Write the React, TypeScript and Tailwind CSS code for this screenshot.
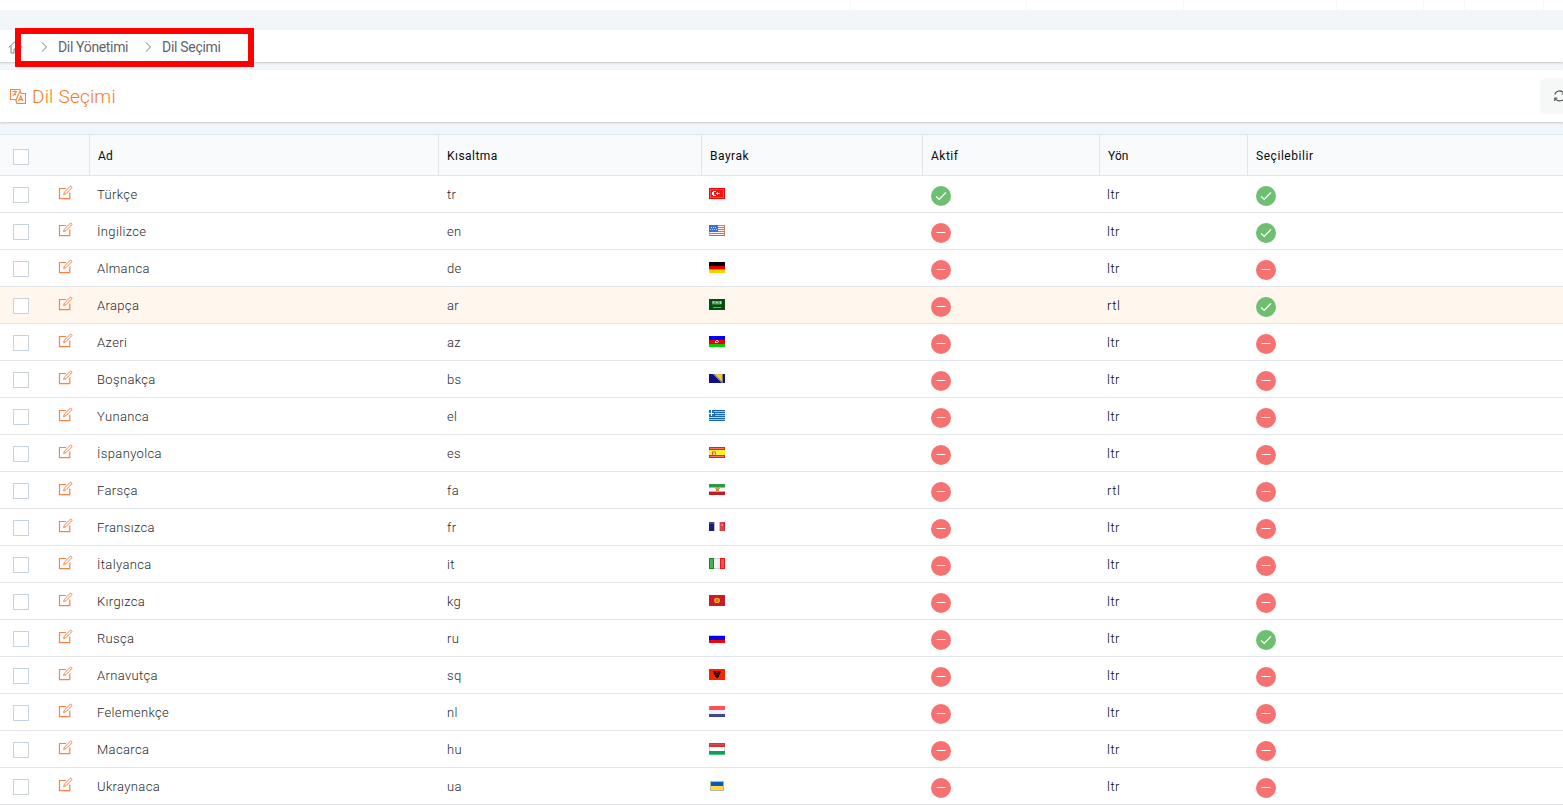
import React from "react";

type Row = { name: string; code: string; rtl?: boolean; active?: boolean; selectable?: boolean; hover?: boolean };

const rows: Row[] = [
  { name: "Türkçe", code: "tr", active: true, selectable: true },
  { name: "İngilizce", code: "en", selectable: true },
  { name: "Almanca", code: "de" },
  { name: "Arapça", code: "ar", rtl: true, selectable: true, hover: true },
  { name: "Azeri", code: "az" },
  { name: "Boşnakça", code: "bs" },
  { name: "Yunanca", code: "el" },
  { name: "İspanyolca", code: "es" },
  { name: "Farsça", code: "fa", rtl: true },
  { name: "Fransızca", code: "fr" },
  { name: "İtalyanca", code: "it" },
  { name: "Kırgızca", code: "kg" },
  { name: "Rusça", code: "ru", selectable: true },
  { name: "Arnavutça", code: "sq" },
  { name: "Felemenkçe", code: "nl" },
  { name: "Macarca", code: "hu" },
  { name: "Ukraynaca", code: "ua" },
];

// x, y, width, height, fill
type Block = [number, number, number, number, string];

const flags: Record<string, Block[]> = {
  tr: [[0, 0, 16, 11, "#f00"], [1, 1, 14, 9, "#fb4a4a"], [2, 2, 12, 7, "#f51414"], [4, 3, 3, 1, "#fff"], [3, 4, 2, 3, "#fff"], [4, 7, 3, 1, "#fff"], [8, 4, 1, 3, "#fdd"], [7, 5, 3, 1, "#fff"], [10, 5, 1, 1, "#fbb"]],
  en: [[0, 0, 16, 11, "#f7efe8"], [0, 0, 16, 1, "#b98a80"], [1, 2, 15, 1, "#e86a5a"], [1, 4, 15, 1, "#e86a5a"], [1, 6, 15, 1, "#e86a5a"], [1, 8, 15, 1, "#e86a5a"], [0, 10, 16, 1, "#b4705f"], [0, 0, 9, 7, "#3d6fd0"], [2, 2, 1, 1, "#cfe0ff"], [4, 2, 1, 1, "#cfe0ff"], [6, 2, 1, 1, "#cfe0ff"], [1, 4, 1, 1, "#cfe0ff"], [3, 4, 1, 1, "#cfe0ff"], [5, 4, 1, 1, "#cfe0ff"], [7, 4, 1, 1, "#cfe0ff"], [0, 7, 1, 4, "#c5998b"], [15, 0, 1, 11, "#c5806d"]],
  de: [[0, 0, 16, 4, "#000"], [0, 4, 16, 3, "#e00000"], [0, 7, 16, 1, "#ee8600"], [0, 8, 16, 3, "#ffd000"]],
  ar: [[0, 0, 16, 11, "#00510d"], [3, 2, 10, 3, "#6b9b70"], [4, 2, 1, 2, "#b8d0ba"], [7, 3, 2, 1, "#b8d0ba"], [11, 2, 1, 3, "#b8d0ba"], [3, 5, 9, 1, "#2d7136"], [4, 8, 8, 1, "#78a27c"]],
  az: [[0, 0, 16, 4, "#0000fa"], [0, 4, 16, 4, "#f00000"], [0, 8, 16, 3, "#00cf00"], [7, 4, 2, 1, "#ffb8b8"], [6, 5, 1, 2, "#fff"], [7, 6, 2, 1, "#ff9c9c"], [9, 5, 1, 1, "#fff"]],
  el: [[0, 0, 16, 11, "#1766b4"], [0, 1, 16, 1, "#9bc5e8"], [6, 3, 10, 1, "#b8d8ef"], [6, 5, 10, 1, "#9bc5e8"], [0, 7, 16, 1, "#b8d8ef"], [0, 9, 16, 1, "#9bc5e8"], [0, 1, 5, 5, "#227ac4"], [2, 0, 1, 6, "#fff"], [0, 3, 5, 1, "#fff"]],
  es: [[0, 0, 16, 3, "#ed1c24"], [0, 3, 16, 5, "#ffee20"], [0, 8, 16, 3, "#ed1c24"], [1, 1, 14, 1, "#f27574"], [1, 9, 14, 1, "#f27574"], [3, 4, 4, 1, "#d99a72"], [3, 5, 1, 3, "#dd5545"], [4, 5, 2, 2, "#f1b4a4"], [6, 5, 1, 3, "#e2763a"]],
  fa: [[0, 0, 16, 3, "#279b48"], [0, 3, 16, 1, "#8fc89e"], [0, 4, 16, 3, "#f7f7f5"], [0, 7, 16, 1, "#ef9a9a"], [0, 8, 16, 3, "#c71925"], [6, 4, 5, 1, "#d9a15b"], [7, 5, 3, 2, "#c98b33"], [8, 3, 1, 1, "#96793a"]],
  fr: [[0, 1, 5, 9, "#1b1e6d"], [0, 1, 5, 2, "#454883"], [5, 1, 1, 9, "#b8bad0"], [6, 1, 4, 9, "#f7f7f9"], [10, 1, 1, 9, "#efb4b8"], [11, 1, 5, 9, "#e0414c"], [12, 3, 2, 2, "#eb767d"], [15, 1, 1, 9, "#d9202e"]],
  it: [[0, 0, 5, 11, "#118a20"], [1, 1, 3, 9, "#52ab5c"], [5, 0, 6, 11, "#f3f3f3"], [5, 0, 6, 1, "#d2d2d2"], [5, 10, 6, 1, "#d2d2d2"], [11, 0, 5, 11, "#f01414"], [12, 1, 3, 9, "#f45454"]],
  kg: [[0, 0, 16, 11, "#cb1a2a"], [6, 3, 4, 5, "#efac26"], [5, 4, 6, 3, "#e79825"], [7, 4, 2, 3, "#d9731f"]],
  ru: [[0, 3, 16, 1, "#c5c5f5"], [0, 4, 16, 4, "#0000fa"], [0, 8, 16, 3, "#fa0000"]],
  sq: [[0, 0, 16, 11, "#fa2000"], [4, 2, 8, 2, "#7c160c"], [5, 2, 2, 3, "#2a0502"], [9, 2, 2, 3, "#2a0502"], [6, 4, 4, 4, "#1b0402"], [5, 5, 6, 1, "#5d1008"], [7, 8, 2, 1, "#4b0c06"]],
  nl: [[0, 0, 16, 4, "#fb5054"], [0, 4, 16, 4, "#f2f2f5"], [0, 8, 16, 3, "#40439a"], [0, 0, 1, 3, "#ff7376"]],
  hu: [[0, 0, 16, 4, "#d7323f"], [1, 1, 14, 1, "#dc4a56"], [0, 4, 16, 4, "#fff"], [0, 4, 1, 4, "#d5d5d5"], [15, 4, 1, 4, "#d5d5d5"], [0, 8, 16, 3, "#159a58"], [0, 11, 16, 1, "#35c982"]],
  ua: [[1, 1, 14, 10, "#bcb995"], [2, 2, 12, 4, "#075abb"], [2, 6, 12, 4, "#ffda4b"]],
};

function Flag({ code }: { code: string }) {
  return (
    <svg className="block h-3 w-4" viewBox="0 0 16 12" shapeRendering="crispEdges">
      {code === "bs" ? (
        <>
          <rect width="16" height="9" y="1" fill="#101184" />
          <path d="M4 1H14V10Z" fill="#f5c622" />
          <path d="M3 1h2l9 9h-2z" fill="#777e92" />
          <rect x="13" y="1" width="1" height="9" fill="#88805a" />
        </>
      ) : (
        flags[code].map(([x, y, w, h, fill], i) => <rect key={i} x={x} y={y} width={w} height={h} fill={fill} />)
      )}
    </svg>
  );
}

function Status({ ok }: { ok?: boolean }) {
  return (
    <svg className="block size-5" viewBox="0 0 20 20" fill="none" stroke="#fff">
      <circle cx="10" cy="10" r="10" fill={ok ? "#6fbf73" : "#f87171"} stroke="none" />
      {ok ? <path d="M5 10.4 8.2 13.4 15 6.3" strokeWidth="1.2" /> : <path d="M5.5 9.5h9" strokeWidth="1" />}
    </svg>
  );
}

function EditIcon() {
  return (
    <svg className="block h-[15px] w-[15px]" viewBox="0 0 15 15" fill="none" stroke="#fb8246" strokeWidth="1.2">
      <path d="M8 3.5H1.5v10.1h10.3V7.5" />
      <path d="M5.6 9.6 6.4 7.1 12.1 1.5a.9.9 0 0 1 1.3 0l.2.2a.9.9 0 0 1 0 1.3L8 8.7Z" strokeWidth="1" />
    </svg>
  );
}

function Chevron({ className }: { className: string }) {
  return (
    <svg className={className} viewBox="0 0 7 10" fill="none" stroke="#7d8289" strokeWidth="1">
      <path d="M.8 .5 5.6 5 .8 9.5" />
    </svg>
  );
}

function Checkbox() {
  return <span className="block size-4 border border-[#c8d3e0] bg-white" />;
}

const columns = "grid grid-cols-[53px_36px_349px_263px_221px_177px_148px_316px]";
const headers = [
  { label: "Ad", style: "tracking-[0.1px]" },
  { label: "Kısaltma", style: "tracking-[0.45px]" },
  { label: "Bayrak", style: "tracking-[0.5px]" },
  { label: "Aktif", style: "tracking-[0.5px]" },
  { label: "Yön", style: "tracking-[0.1px]" },
  { label: "Seçilebilir", style: "tracking-[0.55px]" },
];

export default function App() {
  return (
    <div className="relative h-[805px] w-[1563px] overflow-hidden bg-[#f0f6f9] font-['Roboto',sans-serif]">
      <div className="grid h-2.5 grid-cols-[851px_176px_157px_153px_87px_41px_79px_19px] bg-white">
        {Array.from({ length: 8 }, (_, i) => (
          <span key={i} className={i < 7 ? "border-r border-[#f5f8fa]" : ""} />
        ))}
      </div>

      <nav className="mt-5 flex h-8 items-center bg-white text-sm text-[#5f646b] shadow-[0_1px_2px_rgba(0,0,0,0.18)]">
        <svg className="mt-px ml-2 h-[14px] w-[15px]" viewBox="0 0 15 14" fill="none" stroke="#7d8289">
          <path d="M.7 7.5 7.5 1.2l6.8 6.3M3 6v7h3V9h3v4h3V6" />
        </svg>
        <Chevron className="mt-0.5 ml-[18px] h-2.5 w-[7px]" />
        <span className="ml-2.5 w-[71px] whitespace-nowrap pt-0.5 tracking-[-0.34px]">Dil Yönetimi</span>
        <Chevron className="mt-0.5 ml-4 h-2.5 w-[7px]" />
        <span className="ml-2.5 whitespace-nowrap pt-0.5 tracking-[-0.3px]">Dil Seçimi</span>
      </nav>

      <header className="mt-2 flex h-[52px] items-center bg-white shadow-[0_1px_2px_rgba(0,0,0,0.18)]">
        <svg className="ml-2.5 h-4 w-4" viewBox="0 0 16 16" fill="none" stroke="#fa8332" strokeWidth="1.1">
          <path d="M5.5 11.5h-5V1.5h9.3l1.2 4M11 5.5h4.5v10H7l-1.5-4" />
          <path d="M2.5 3.5h4.8M5 2.5v1M6.5 3.5 3 8M3.7 5.2 6 7.2M8.6 13.3l2.2-5.2 2.2 5.2M9.4 11.6H12M9.8 3.5 6 12" />
        </svg>
        <h1 className="ml-1.5 pt-0.5 text-[19px] font-light tracking-[0.2px] text-[#f97a22]">Dil Seçimi</h1>
        <button className="ml-auto flex h-9 w-[23px] items-center rounded-l-md bg-[#f6f8f7] pl-3.5">
          <svg className="h-3 w-[14px] shrink-0" viewBox="0 0 14 12" fill="none" stroke="#4b4f55" strokeWidth="1.1">
            <path d="M.8 4.5C2 .2 7.2-.2 9.8 3.2M10.3 1v3H7.6M10.4 7.5C9 11.7 4 11.7 1.4 8.8M.7 11V8h2.7" />
          </svg>
        </button>
      </header>

      <main className="mt-3 border-t border-[#e2e5e9]">
        <div className={`${columns} h-[41px] border-b border-[#e2e5e9] bg-[#f8fafc] text-xs text-[#090b0f]`}>
          <div className="pt-3.5 pl-[13px]"><Checkbox /></div>
          <div />
          {headers.map(({ label, style }) => (
            <div key={label} className="flex items-center border-l border-[#e2e5e9] pt-px pl-2">
              <span className={style}>{label}</span>
            </div>
          ))}
        </div>
        {rows.map((row) => (
          <div
            key={row.code}
            className={`${columns} h-[37px] border-b border-[#e2e5e9] text-[13px] leading-9 font-light text-[#26292e] ${row.hover ? "bg-[#fff6ee]" : "bg-white"}`}
          >
            <div className="pt-[11px] pl-[13px]"><Checkbox /></div>
            <div className="pt-[9px] pl-[5px]"><EditIcon /></div>
            <div className="pl-2 pt-px tracking-[0.35px]">{row.name}</div>
            <div className="pl-[9px] pt-px tracking-[0.35px]">{row.code}</div>
            <div className="pt-3 pl-2"><Flag code={row.code} /></div>
            <div className="pt-2.5 pl-[9px]"><Status ok={row.active} /></div>
            <div className="pl-2 pt-px tracking-[0.5px] text-[#090b0f]">{row.rtl ? "rtl" : "ltr"}</div>
            <div className="pt-2.5 pl-[9px]"><Status ok={row.selectable} /></div>
          </div>
        ))}
      </main>

      <div className="absolute top-7 left-[15px] h-[39px] w-[239px] border-[6px] border-[#ff0000]" />
    </div>
  );
}
